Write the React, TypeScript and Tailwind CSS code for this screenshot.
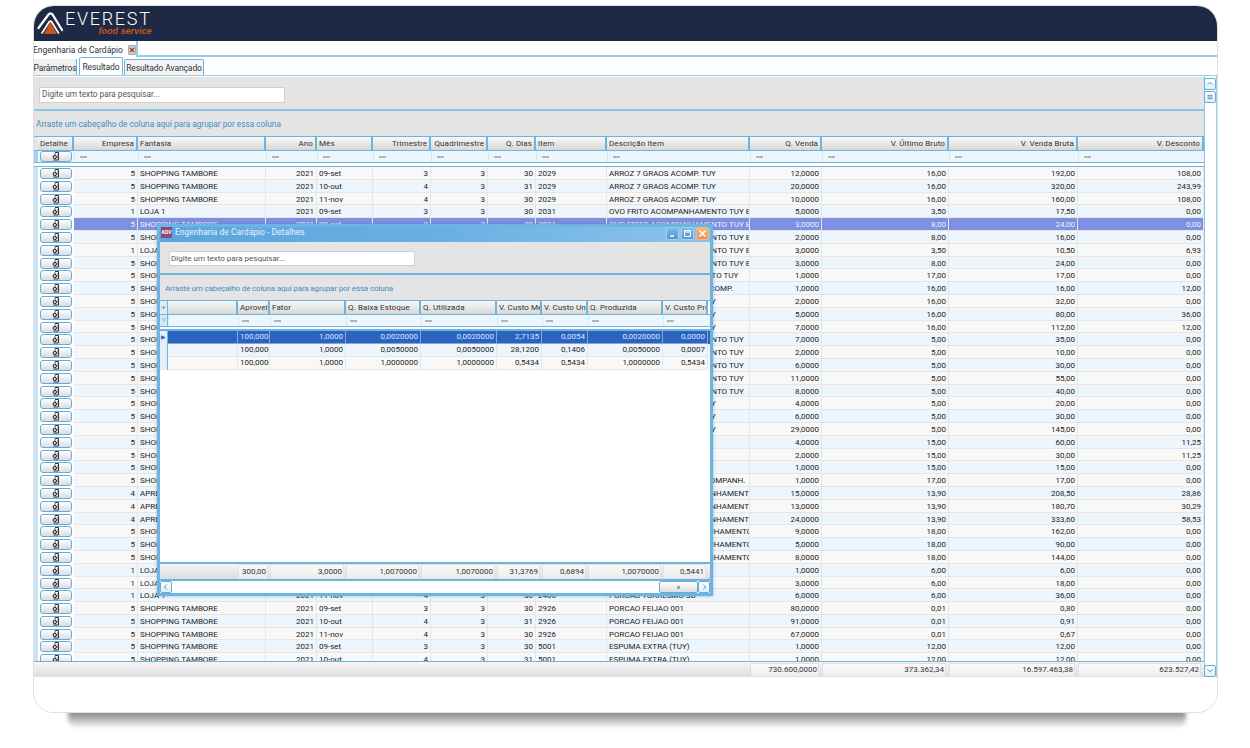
import React from 'react';

type Row = string[];

const ST = 'SHOPPING TAMBORE';
const OVO = 'OVO FRITO ACOMPANHAMENTO TUY E';
const OVO2 = 'OVO FRITO ACOMPANHAMENTO TUY';
const ARROZ = 'ARROZ 7 GRAOS ACOMP. TUY';
const PURE = 'PURE DE BATATAS ACOMPANHAMENT';
const TROPEIRO = 'ARROZ TROPEIRO ACOMPANHAMENTO';

// empresa, fantasia, ano, mes, trimestre, quadrimestre, dias, item, descricao, qtd, ultimo, bruta, desconto
const rows: Row[] = [
  ['5', ST, '2021', '09-set', '3', '3', '30', '2029', ARROZ, '12,0000', '16,00', '192,00', '108,00'],
  ['5', ST, '2021', '10-out', '4', '3', '31', '2029', ARROZ, '20,0000', '16,00', '320,00', '243,99'],
  ['5', ST, '2021', '11-nov', '4', '3', '30', '2029', ARROZ, '10,0000', '16,00', '160,00', '108,00'],
  ['1', 'LOJA 1', '2021', '09-set', '3', '3', '30', '2031', OVO, '5,0000', '3,50', '17,50', '0,00'],
  ['5', ST, '2021', '09-set', '3', '3', '30', '2031', OVO, '3,0000', '8,00', '24,00', '0,00'],
  ['5', ST, '2021', '10-out', '4', '3', '31', '2031', OVO, '2,0000', '8,00', '16,00', '0,00'],
  ['1', 'LOJA 1', '2021', '10-out', '4', '3', '31', '2031', OVO, '3,0000', '3,50', '10,50', '6,93'],
  ['5', ST, '2021', '11-nov', '4', '3', '30', '2031', OVO, '3,0000', '8,00', '24,00', '0,00'],
  ['5', ST, '2021', '09-set', '3', '3', '30', '2040', 'PEIXE AO ACOMPANHAMENTO TUY', '1,0000', '17,00', '17,00', '0,00'],
  ['5', ST, '2021', '09-set', '3', '3', '30', '2051', 'ARROZ 7 GRAOS BRANCO ACOMP.', '1,0000', '16,00', '16,00', '12,00'],
  ['5', ST, '2021', '10-out', '4', '3', '31', '2052', ARROZ, '2,0000', '16,00', '32,00', '0,00'],
  ['5', ST, '2021', '11-nov', '4', '3', '30', '2052', ARROZ, '5,0000', '16,00', '80,00', '36,00'],
  ['5', ST, '2021', '09-set', '3', '3', '30', '2052', ARROZ, '7,0000', '16,00', '112,00', '12,00'],
  ['5', ST, '2021', '09-set', '3', '3', '30', '2060', OVO2, '7,0000', '5,00', '35,00', '0,00'],
  ['5', ST, '2021', '10-out', '4', '3', '31', '2060', OVO2, '2,0000', '5,00', '10,00', '0,00'],
  ['5', ST, '2021', '11-nov', '4', '3', '30', '2060', OVO2, '6,0000', '5,00', '30,00', '0,00'],
  ['5', ST, '2021', '09-set', '3', '3', '30', '2061', OVO2, '11,0000', '5,00', '55,00', '0,00'],
  ['5', ST, '2021', '10-out', '4', '3', '31', '2061', OVO2, '8,0000', '5,00', '40,00', '0,00'],
  ['5', ST, '2021', '09-set', '3', '3', '30', '2062', ARROZ, '4,0000', '5,00', '20,00', '0,00'],
  ['5', ST, '2021', '10-out', '4', '3', '31', '2062', ARROZ, '6,0000', '5,00', '30,00', '0,00'],
  ['5', ST, '2021', '11-nov', '4', '3', '30', '2062', ARROZ, '29,0000', '5,00', '145,00', '0,00'],
  ['5', ST, '2021', '09-set', '3', '3', '30', '2070', 'SALADA', '4,0000', '15,00', '60,00', '11,25'],
  ['5', ST, '2021', '10-out', '4', '3', '31', '2070', 'SALADA', '2,0000', '15,00', '30,00', '11,25'],
  ['5', ST, '2021', '11-nov', '4', '3', '30', '2070', 'SALADA', '1,0000', '15,00', '15,00', '0,00'],
  ['5', ST, '2021', '09-set', '3', '3', '30', '2080', 'BIFES GRELHADOS COM ACOMPANH.', '1,0000', '17,00', '17,00', '0,00'],
  ['4', 'APRESENTACAO', '2021', '09-set', '3', '3', '30', '2090', PURE, '15,0000', '13,90', '208,50', '28,86'],
  ['4', 'APRESENTACAO', '2021', '10-out', '4', '3', '31', '2090', PURE, '13,0000', '13,90', '180,70', '30,29'],
  ['4', 'APRESENTACAO', '2021', '11-nov', '4', '3', '30', '2090', PURE, '24,0000', '13,90', '333,60', '58,53'],
  ['5', ST, '2021', '09-set', '3', '3', '30', '2100', TROPEIRO, '9,0000', '18,00', '162,00', '0,00'],
  ['5', ST, '2021', '10-out', '4', '3', '31', '2100', TROPEIRO, '5,0000', '18,00', '90,00', '0,00'],
  ['5', ST, '2021', '11-nov', '4', '3', '30', '2100', TROPEIRO, '8,0000', '18,00', '144,00', '0,00'],
  ['1', 'LOJA 1', '2021', '09-set', '3', '3', '30', '2466', 'PORCAO TORRESMO 3D', '1,0000', '6,00', '6,00', '0,00'],
  ['1', 'LOJA 1', '2021', '10-out', '4', '3', '31', '2466', 'PORCAO TORRESMO 3D', '3,0000', '6,00', '18,00', '0,00'],
  ['1', 'LOJA 1', '2021', '11-nov', '4', '3', '30', '2466', 'PORCAO TORRESMO 3D', '6,0000', '6,00', '36,00', '0,00'],
  ['5', ST, '2021', '09-set', '3', '3', '30', '2926', 'PORCAO FEIJAO 001', '80,0000', '0,01', '0,80', '0,00'],
  ['5', ST, '2021', '10-out', '4', '3', '31', '2926', 'PORCAO FEIJAO 001', '91,0000', '0,01', '0,91', '0,00'],
  ['5', ST, '2021', '11-nov', '4', '3', '30', '2926', 'PORCAO FEIJAO 001', '67,0000', '0,01', '0,67', '0,00'],
  ['5', ST, '2021', '09-set', '3', '3', '30', '5001', 'ESPUMA EXTRA (TUY)', '1,0000', '12,00', '12,00', '0,00'],
  ['5', ST, '2021', '10-out', '4', '3', '31', '5001', 'ESPUMA EXTRA (TUY)', '1,0000', '12,00', '12,00', '0,00'],
];

const mainHeaders: [string, boolean][] = [
  ['Detalhe', false],
  ['Empresa', true],
  ['Fantasia', false],
  ['Ano', true],
  ['Mês', false],
  ['Trimestre', true],
  ['Quadrimestre', true],
  ['Q. Dias', true],
  ['Item', false],
  ['Descrição Item', false],
  ['Q. Venda', true],
  ['V. Último Bruto', true],
  ['V. Venda Bruta', true],
  ['V. Desconto', true],
];

const alignRight = [true, false, true, false, true, true, true, false, false, true, true, true, true];

const mainCols =
  'grid grid-cols-[4px_36px_64px_128px_51px_56px_58px_57px_48px_71px_143px_72px_127px_129px_126px]';
const modalCols = 'grid grid-cols-[8px_70px_32px_76px_75px_76px_45px_46px_75px_45px]';

const detailHeaders = ['', 'Aproveit', 'Fator', 'Q. Baixa Estoque', 'Q. Utilizada', 'V. Custo Mé', 'V. Custo Uni', 'Q. Produzida', 'V. Custo Pro'];
const detailRows = [
  ['', '100,0000', '1,0000', '0,0020000', '0,0020000', '2,7135', '0,0054', '0,0020000', '0,0000'],
  ['', '100,0000', '1,0000', '0,0050000', '0,0050000', '28,1200', '0,1406', '0,0050000', '0,0007'],
  ['', '100,0000', '1,0000', '1,0000000', '1,0000000', '0,5434', '0,5434', '1,0000000', '0,5434'],
];
const detailTotals = ['', '300,00', '3,0000', '1,0070000', '1,0070000', '31,3769', '0,6894', '1,0070000', '0,5441'];

function DocIcon() {
  return (
    <svg width="9" height="9" viewBox="0 0 9 9" fill="none">
      <path d="M3 .5h3.5v7.5H1.5" stroke="#333" strokeWidth="1" />
      <path d="M3 1v2M5 3h1M5 5h1" stroke="#666" strokeWidth="1" />
      <circle cx="2.8" cy="5" r="1.7" stroke="#222" strokeWidth="1" fill="#ccc" />
    </svg>
  );
}

function DetailButton() {
  return (
    <div className="mx-[2px] flex h-[11px] items-center justify-center rounded-[3px] border border-[#62aedb] bg-gradient-to-b from-white to-[#dcdcdc]">
      <DocIcon />
    </div>
  );
}

function FilterMark() {
  return <span className="block h-[2px] w-[7px] bg-[#b4b4b4]" />;
}

function HeaderCell({ label, right }: { label: string; right?: boolean }) {
  return (
    <div
      className={
        'overflow-hidden whitespace-nowrap border-r-2 border-[#6db4df] bg-gradient-to-b from-[#f8f8f8] to-[#d8d8d8] px-[2px] leading-[13px] tracking-[0.1px] text-[#333] ' +
        (right ? 'text-right' : 'text-left')
      }
    >
      {label}
    </div>
  );
}

function MainGrid() {
  return (
    <div className="flex min-h-0 flex-1 flex-col">
      <div className={mainCols + ' h-[13px] shrink-0'}>
        <div className="bg-[#dfe8ef]" />
        {mainHeaders.map(([label, right]) => (
          <HeaderCell key={label} label={label} right={right} />
        ))}
      </div>
      <div className={mainCols + ' h-[13px] shrink-0 border-y border-[#6db4df] bg-[#eef6fd]'}>
        <div className="bg-[#a9cfe8]" />
        <DetailButton />
        {mainHeaders.slice(1).map(([label]) => (
          <div key={label} className="flex items-center border-l border-[#dbe6ee] pl-[5px]">
            <FilterMark />
          </div>
        ))}
      </div>
      <div className="h-[4px] shrink-0 border-b border-[#6db4df] bg-white" />
      <div className="min-h-0 flex-1 overflow-hidden">
        {rows.map((row, i) => {
          const selected = i === 4;
          const tone = selected
            ? 'bg-[#7c8fe0] text-[#eef1ff]'
            : i % 2 === 0
              ? 'bg-[#f8f8f8] text-[#222]'
              : 'bg-[#eef6fd] text-[#222]';
          return (
            <div key={i} className={mainCols + ' h-[12.81px] ' + tone}>
              <div className="bg-[#cfe2f0]" />
              <div className="bg-white pt-px">
                <DetailButton />
              </div>
              {row.map((cell, c) => (
                <div
                  key={c}
                  className={
                    'overflow-hidden whitespace-nowrap border-r border-b border-[#e6e6e6] px-[2px] leading-[13px] ' +
                    (alignRight[c] ? 'text-right' : 'text-left')
                  }
                >
                  {cell}
                </div>
              ))}
            </div>
          );
        })}
      </div>
    </div>
  );
}

function ScrollButton({ dir }: { dir: 'up' | 'down' | 'grip' | 'left' | 'right' }) {
  const paths = {
    up: 'M3 7l3-3 3 3',
    down: 'M3 4l3 3 3-3',
    left: 'M7 3L4 6l3 3',
    right: 'M5 3l3 3-3 3',
    grip: 'M3 4h6M3 6h6M3 8h6',
  };
  return (
    <div className="flex h-[12px] w-[12px] items-center justify-center rounded-[2px] border border-[#62aedb] bg-gradient-to-b from-white to-[#e2eef6]">
      <svg width="12" height="12" viewBox="0 0 12 12" fill="none">
        <path d={paths[dir]} stroke="#4f97c6" strokeWidth="1.2" />
      </svg>
    </div>
  );
}

function WindowButton({ kind }: { kind: 'min' | 'max' | 'close' }) {
  const bg =
    kind === 'close'
      ? 'border-[#e9b98c] bg-gradient-to-b from-[#f5b77f] to-[#ec9350]'
      : 'border-[#a5d0ec] bg-gradient-to-b from-[#7dbae6] to-[#4f97d0]';
  return (
    <div className={'flex h-[13px] w-[13px] items-center justify-center rounded-[2px] border ' + bg}>
      <svg width="9" height="9" viewBox="0 0 9 9" fill="none">
        {kind === 'min' && <path d="M2 7h4" stroke="white" strokeWidth="1.5" />}
        {kind === 'max' && <path d="M1.5 1.5h6v6h-6zM1.5 3h6" stroke="white" strokeWidth="1" />}
        {kind === 'close' && <path d="M1.5 1.5l6 6M7.5 1.5l-6 6" stroke="white" strokeWidth="1.6" />}
      </svg>
    </div>
  );
}

function DetailsModal() {
  return (
    <div className="absolute left-[123px] top-[218px] flex h-[372px] w-[556px] flex-col border-[3px] border-[#6db4e2] bg-white text-[8px] shadow-[0_0_3px_rgba(60,120,170,0.5)]">
      <div className="flex h-[15px] shrink-0 items-start bg-gradient-to-r from-[#5aa5de] via-[#6aafe2] to-[#8cc3ea] pr-[1px]">
        <div className="ml-[1px] flex h-[11px] w-[11px] items-center justify-center bg-[#8b4a7c] text-[5px] font-bold leading-none text-white">
          ADV
        </div>
        <span className="ml-[3px] text-[8.5px] leading-[11px] text-[#e8f2fa]">Engenharia de Cardápio - Detalhes</span>
        <div className="ml-auto flex gap-[2px]">
          <WindowButton kind="min" />
          <WindowButton kind="max" />
          <WindowButton kind="close" />
        </div>
      </div>
      <div className="flex h-[33px] shrink-0 items-center border-b-2 border-[#6db4df] bg-[#e4e4e4] pl-[9px] pt-[2px]">
        <div className="flex h-[15px] w-[246px] items-center border border-[#d0d0d0] bg-white pl-[1px] text-[#555]">
          Digite um texto para pesquisar...
        </div>
      </div>
      <div className="flex h-[25px] shrink-0 items-center bg-[#e4e4e4] pl-[5px] pt-[2px] tracking-[-0.15px] text-[#3c8fc4]">
        Arraste um cabeçalho de coluna aqui para agrupar por essa coluna
      </div>
      <div className={modalCols + ' h-[14px] shrink-0 border-t border-[#6db4df]'}>
        <div className="flex items-center justify-center border-r border-[#6db4df] bg-[#dfeaf3] text-[8px] leading-none text-[#3c8fc4]">+</div>
        {detailHeaders.map((h, i) => (
          <HeaderCell key={i} label={h} />
        ))}
      </div>
      <div className={modalCols + ' h-[13px] shrink-0 border-y border-[#6db4df] bg-[#eef6fd]'}>
        <div className="border-r border-[#6db4df] bg-[#d7e8f4] text-center text-[7px] leading-[11px] text-[#3c8fc4]">▿</div>
        {detailHeaders.map((h, i) => (
          <div key={i} className="flex items-center border-l border-[#dbe6ee] pl-[3px]">
            {i > 0 && <FilterMark />}
          </div>
        ))}
      </div>
      <div className="h-[4px] shrink-0 border-b-2 border-[#6db4df] bg-white" />
      <div className="min-h-0 flex-1 bg-white">
        {detailRows.map((row, i) => (
          <div
            key={i}
            className={
              modalCols +
              ' h-[13px] ' +
              (i === 0 ? 'bg-[#2b63c1] text-[#dce8f8]' : i === 1 ? 'bg-[#eef6fd] text-[#222]' : 'bg-[#f8f8f8] text-[#222]')
            }
          >
            <div className="border-r border-[#6db4df] bg-[#e4eef6] text-center text-[6px] leading-[12px] text-[#2b63c1]">
              {i === 0 ? '▶' : ''}
            </div>
            {row.map((cell, c) => (
              <div
                key={c}
                className={
                  'overflow-hidden whitespace-nowrap border-r border-b px-[2px] text-right leading-[12px] ' +
                  (i === 0 ? 'border-[#8aa4d8]' : 'border-[#e6e6e6]')
                }
              >
                {cell}
              </div>
            ))}
          </div>
        ))}
      </div>
      <div className={modalCols + ' h-[19px] shrink-0 items-center border-y-2 border-[#6db4df] bg-gradient-to-b from-[#f4f4f4] to-[#dcdcdc]'}>
        {['ind', ...detailTotals].map((t, i) => (
          <div
            key={i}
            className={
              i < 2
                ? ''
                : 'mr-[2px] h-[15px] border border-[#e2e2e2] bg-gradient-to-b from-[#fafafa] to-[#ececec] pr-[1px] text-right leading-[13px] text-[#333]'
            }
          >
            {i < 2 ? '' : t}
          </div>
        ))}
      </div>
      <div className="flex h-[12px] shrink-0 bg-white">
        <ScrollButton dir="left" />
        <div className="ml-auto flex h-[12px] w-[39px] items-center justify-center rounded-[2px] border border-[#62aedb] bg-gradient-to-b from-white to-[#dedede]">
          <span className="h-[3px] w-[3px] bg-[#6db4df]" />
        </div>
        <ScrollButton dir="right" />
      </div>
    </div>
  );
}

function Logo() {
  return (
    <div className="flex h-[35px] shrink-0 items-center bg-[#1d2945] pl-[3px]">
      <svg width="27" height="23" viewBox="0 0 27 23" fill="none">
        <path d="M7 22l6.5-13 6.5 13z" fill="#c2571f" />
        <path d="M1.5 16L11.5 2.5c1.2-1.5 2.8-1.5 4 0L25 18" stroke="white" strokeWidth="2.2" strokeLinecap="round" />
        <path d="M5 21l7-11c.8-1.2 2-1.2 2.8 0l6.7 11" stroke="white" strokeWidth="1.6" strokeLinecap="round" />
      </svg>
      <div className="ml-[1px] flex flex-col items-end">
        <span className="text-[18px] font-light leading-[16px] tracking-[1.7px] text-white">EVEREST</span>
        <span className="font-['Liberation_Sans',sans-serif] text-[9px] font-bold italic leading-[9px] text-[#c2571f]">food service</span>
      </div>
    </div>
  );
}

export default function App() {
  return (
    <div className="h-[748px] w-[1250px] overflow-hidden bg-white pl-[34px] pt-[6px] font-['Roboto','Noto_Sans',sans-serif] text-[8px] text-[#222]">
      <div className="relative z-10 flex h-[706px] w-[1183px] flex-col overflow-hidden rounded-[20px] bg-white shadow-[0_0_0_1px_#dfdfdf]">
        <Logo />
        <div className="flex h-[16px] shrink-0 border-b-2 border-[#9ccde9]">
          <div className="ml-[-1px] flex h-[16px] w-[105px] items-center gap-[5px] whitespace-nowrap border-r-2 border-[#9ccde9] bg-white pt-[2px] text-[8.5px] text-[#333]">
            <span>Engenharia de Cardápio</span>
            <span className="flex h-[10px] w-[10px] items-center justify-center rounded-[1px] border border-[#7fb6dc] bg-[#eccba3]">
              <svg width="6" height="6" viewBox="0 0 6 6">
                <path d="M1 1l4 4M5 1L1 5" stroke="#a5401a" strokeWidth="1.3" />
              </svg>
            </span>
          </div>
        </div>
        <div className="flex h-[19px] shrink-0 items-end gap-[1px] whitespace-nowrap border-b border-[#9ccde9] text-[8.5px] tracking-[-0.1px] text-[#333]">
          <div className="flex h-[16px] w-[43px] items-center justify-center border-r border-[#6db4df] bg-[#f0f0f0] pt-[2px]">Parâmetros</div>
          <div className="ml-[1px] flex h-[18px] w-[44px] items-center justify-center rounded-t-[2px] border-x border-t border-[#6db4df] bg-white pt-[2px]">Resultado</div>
          <div className="flex h-[16px] w-[80px] items-center justify-center rounded-t-[2px] border-x border-t border-[#6db4df] bg-[#f4f4f4] pt-[2px]">Resultado Avançado</div>
        </div>
        <div className="flex min-h-0 flex-1 border-r border-[#9ccde9]">
          <div className="flex min-h-0 w-[1170px] flex-col pt-px shadow-[1px_0_0_#8cc4e6]">
            <div className="flex h-[34px] shrink-0 items-center border-b-2 border-[#8cc4e6] bg-[#e4e4e4] pl-[5px] pt-[3px]">
              <div className="flex h-[16px] w-[246px] items-center border border-[#d0d0d0] bg-white pl-[2px] text-[8.25px] text-[#555]">
                Digite um texto para pesquisar...
              </div>
            </div>
            <div className="flex h-[25px] shrink-0 items-center bg-[#e4e4e4] pl-[2px] pt-[2px] text-[8.25px] text-[#3c8fc4]">
              Arraste um cabeçalho de coluna aqui para agrupar por essa coluna
            </div>
            <div className="flex min-h-0 flex-1 flex-col border-y border-[#6db4df]">
              <MainGrid />
            </div>
            <div className={mainCols + ' h-[15px] shrink-0 bg-gradient-to-b from-[#f6f6f6] to-[#dedede] py-px'}>
              <div className="col-span-11" />
              {['730.600,0000', '373.362,34', '16.597.463,38', '623.527,42'].map(total => (
                <div
                  key={total}
                  className="mr-[3px] border border-[#dedede] bg-gradient-to-b from-[#fbfbfb] to-[#ededed] pr-[1px] text-right leading-[12px] text-[#333]"
                >
                  {total}
                </div>
              ))}
            </div>
          </div>
          <div className="flex w-[12px] flex-col pt-[2px]">
            <ScrollButton dir="up" />
            <div className="h-px" />
            <ScrollButton dir="grip" />
            <div className="flex-1" />
            <ScrollButton dir="down" />
          </div>
        </div>
        <div className="h-[35px] shrink-0 bg-white" />
        <DetailsModal />
      </div>
      <div className="ml-[34px] mt-[-2px] h-[18px] w-[1118px] rounded-b-[10px] bg-gradient-to-b from-[#7a7a7a] via-[#b4b4b4] to-white blur-[2px]" />
    </div>
  );
}
